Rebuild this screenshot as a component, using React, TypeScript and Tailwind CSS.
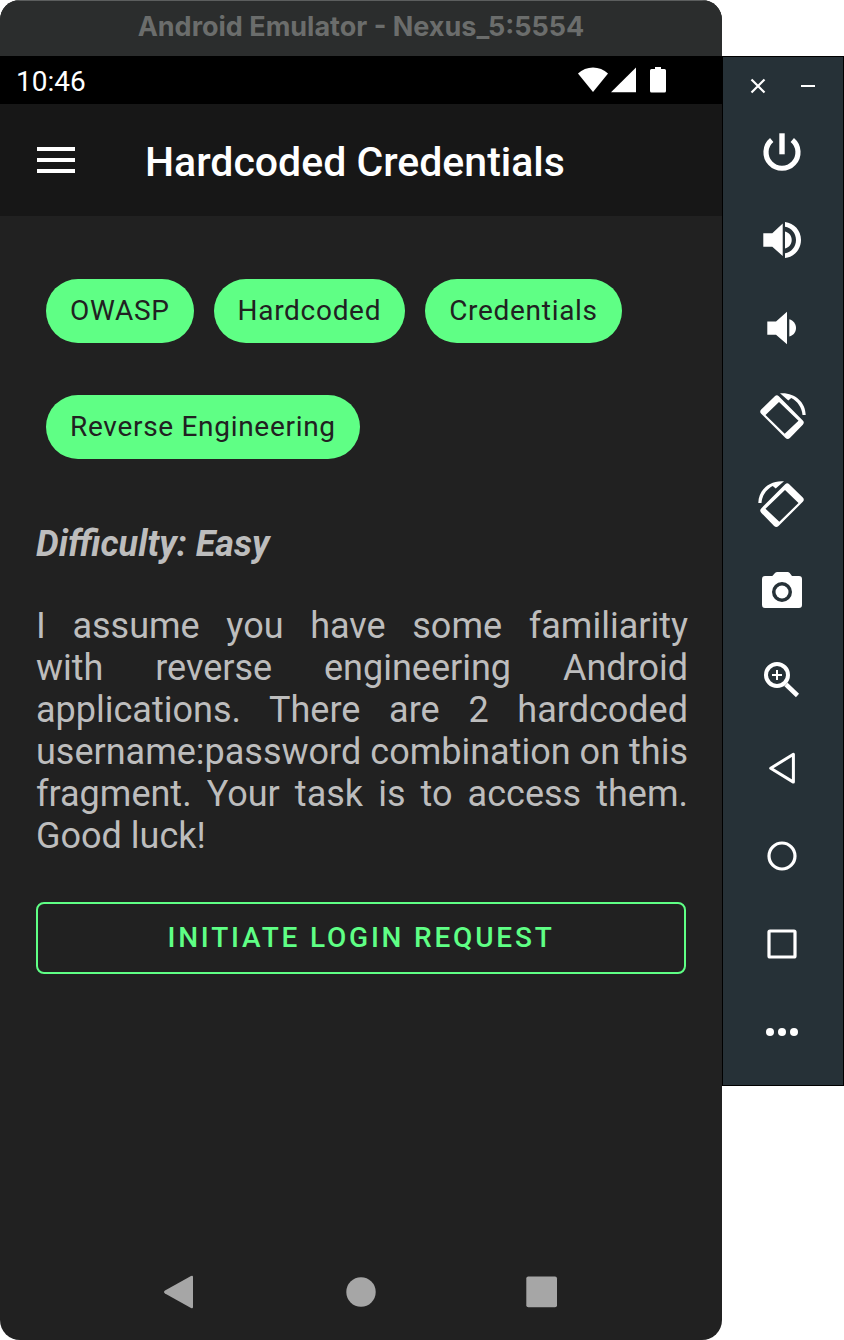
import type { ReactNode } from "react";

const tags = ["OWASP", "Hardcoded", "Credentials", "Reverse Engineering"];

const rotateShape = (
  <>
    <path
      fillRule="evenodd"
      d="M15.8 4.2Q17.8 2.2 19.8 4.2L43.8 28.4Q45.8 30.6 43.8 32.8L30.9 46Q28.7 48 26.5 46L2.2 21.8Q0.2 19.7 2.2 17.6ZM20 10L6.5 23L25.7 41.8L39.5 28.8Z"
    />
    <path d="M21 1.3C35 0 46.5 9.500 46.700 23H43.500C43 15.500 38.500 9.200 32.200 6L29.300 8.500Z" />
  </>
);

const tools: { label: string; icon: ReactNode }[] = [
  {
    label: "Power",
    icon: (
      <>
        <path d="M12.7 12A16 16 0 1 0 33.3 12" fill="none" stroke="currentColor" strokeWidth="5.2" />
        <rect x="20.300" y="5.300" width="5.400" height="21" />
      </>
    ),
  },
  {
    label: "Volume up",
    icon: (
      <>
        <path d="M4.300 17.200H13.300L23.700 7.500V40L13.300 30.700H4.300Z" />
        <path d="M26 15.500C30 16.500 32.700 19.800 32.700 24S30 31.500 26 32.500Z" />
        <path d="M26 6C35.200 7 42 14.500 42 24S35.200 41 26 42V37.200C32.300 36.300 37 30.800 37 24S32.300 11.700 26 10.800Z" />
      </>
    ),
  },
  {
    label: "Volume down",
    icon: (
      <>
        <path d="M8.300 17.500H17L28 7.800V40.200L17 30.700H8.300Z" />
        <path d="M30.300 15.300C34.300 16.500 37 19.800 37 24S34.300 31.500 30.300 32.500Z" />
      </>
    ),
  },
  { label: "Rotate right", icon: rotateShape },
  { label: "Rotate left", icon: <g transform="matrix(-1 0 0 1 46 0)">{rotateShape}</g> },
  {
    label: "Take screenshot",
    icon: (
      <>
        <path
          fillRule="evenodd"
          d="M13.300 8L16 5Q17 4 18.300 4H28.500Q29.800 4 30.700 5L33 8H40Q43 8 43 11V37Q43 40 40 40H6Q3 40 3 37V11Q3 8 6 8ZM23 14A10 10 0 1 0 23 34A10 10 0 1 0 23 14Z"
        />
        <circle cx="23" cy="24" r="6.500" />
      </>
    ),
  },
  {
    label: "Zoom",
    icon: (
      <g fill="none" stroke="currentColor">
        <circle cx="18" cy="19" r="11" strokeWidth="4" />
        <path d="M13 19H23M18 14V24" strokeWidth="2" />
        <path d="M27 28.500L38.500 39.500" strokeWidth="4.500" />
      </g>
    ),
  },
  {
    label: "Back",
    icon: <path d="M11.700 24.200L34.400 10.300V38.100Z" fill="none" stroke="currentColor" strokeWidth="3" strokeLinejoin="round" />,
  },
  { label: "Home", icon: <circle cx="23" cy="24" r="13" fill="none" stroke="currentColor" strokeWidth="3.200" /> },
  {
    label: "Overview",
    icon: <rect x="10" y="11" width="26" height="26" rx="1" fill="none" stroke="currentColor" strokeWidth="3.200" />,
  },
  {
    label: "More",
    icon: (
      <>
        <circle cx="11" cy="24" r="4" />
        <circle cx="23" cy="24" r="4" />
        <circle cx="35" cy="24" r="4" />
      </>
    ),
  },
];

function StatusBar() {
  return (
    <div className="flex h-12 items-center justify-between bg-black pl-4 pr-14 text-white">
      <span className="pt-[3px] text-[28px] leading-8">10:46</span>
      <svg className="h-7 w-[90px]" viewBox="0 0 90 28" fill="currentColor" aria-hidden="true">
        <path d="M2 7.500C10 -.500 24 -.500 32 7.500L17 26Z" />
        <path d="M60 1.500V26.200H35Z" />
        <path d="M79 1H85V3H88.500Q90 3 90 4.500V25Q90 26.500 88.500 26.500H75.500Q74 26.500 74 25V4.500Q74 3 75.500 3H79Z" />
      </svg>
    </div>
  );
}

function AppBar() {
  return (
    <header className="flex h-28 items-center gap-[69px] bg-[#171717] pl-9 text-white">
      <button type="button" aria-label="Open menu">
        <svg className="h-10 w-10" viewBox="0 0 40 40" fill="currentColor" aria-hidden="true">
          <path d="M1 7H39V11H1ZM1 18H39V22H1ZM1 29H39V33H1Z" />
        </svg>
      </button>
      <h1 className="pt-1 text-[41px] font-medium leading-[48px]">Hardcoded Credentials</h1>
    </header>
  );
}

function NavigationBar() {
  return (
    <nav className="flex h-24 items-center justify-center gap-[142px] text-[#a6a6a6]">
      <button type="button" aria-label="Back">
        <svg className="h-10 w-10" viewBox="0 0 40 40" fill="currentColor" aria-hidden="true">
          <path d="M6 18.500L32 4Q34 3 34 5V35Q34 37 32 36L6 21.500Q4 20 6 18.500Z" />
        </svg>
      </button>
      <button type="button" aria-label="Home">
        <svg className="h-10 w-10" viewBox="0 0 40 40" fill="currentColor" aria-hidden="true">
          <circle cx="20" cy="20" r="14.700" />
        </svg>
      </button>
      <button type="button" aria-label="Overview">
        <svg className="h-10 w-10" viewBox="0 0 40 40" fill="currentColor" aria-hidden="true">
          <rect x="3.300" y="4.500" width="30.700" height="30.700" rx="2" />
        </svg>
      </button>
    </nav>
  );
}

function Toolbar() {
  return (
    <aside className="mt-14 w-[122px] shrink-0 self-start border border-black bg-[#263137] pb-[9px] text-white">
      <div className="flex h-[51px] items-center justify-center gap-[30px] pt-[6px]">
        <button type="button" aria-label="Close">
          <svg className="h-5 w-5" viewBox="0 0 20 20" fill="none" stroke="currentColor" strokeWidth="2.200" aria-hidden="true">
            <path d="M3.500 3.500L16.500 16.500M16.500 3.500L3.500 16.500" />
          </svg>
        </button>
        <button type="button" aria-label="Minimize">
          <svg className="h-5 w-5" viewBox="0 0 20 20" fill="currentColor" aria-hidden="true">
            <rect x="3" y="9" width="14" height="2" />
          </svg>
        </button>
      </div>
      {tools.map((tool) => (
        <button key={tool.label} type="button" aria-label={tool.label} className="flex h-[88px] w-full items-center justify-center">
          <svg className="h-12 w-12 overflow-visible" viewBox="0 0 48 48" fill="currentColor" aria-hidden="true">
            {tool.icon}
          </svg>
        </button>
      ))}
    </aside>
  );
}

export default function App() {
  return (
    <div className="flex min-h-screen bg-white font-['Roboto',sans-serif]">
      <div className="flex min-w-0 flex-1 flex-col overflow-hidden rounded-[20px] bg-[#212121]">
        <div className="flex h-14 items-center justify-center border-t border-[#5c5e5e] bg-[#2b2d2d] pb-1">
          <span className="font-['Inter',sans-serif] text-[27px] font-bold leading-8 text-[#6b6d6c]">
            Android Emulator - Nexus_5:5554
          </span>
        </div>
        <StatusBar />
        <AppBar />
        <main className="flex flex-1 flex-col px-9 pt-[63px]">
          <ul className="flex flex-wrap gap-x-5 gap-y-[52px] px-[10px]">
            {tags.map((tag) => (
              <li key={tag} className="flex h-16 items-center rounded-full bg-[#5fff85] px-6 text-[28px] leading-8 tracking-wide text-[#212121]">
                {tag}
              </li>
            ))}
          </ul>
          <h2 className="mt-16 text-[36px] font-bold italic leading-[42px] text-[#bdbdbd]">Difficulty: Easy</h2>
          <p className="-mr-0.5 mt-10 text-justify text-[36px] leading-[42px] text-[#bdbdbd]">
            I assume you have some familiarity with&nbsp;reverse engineering Android applications. There are 2 hardcoded
            username:password combination on this fragment. Your task is to access them. Good luck!
          </p>
          <button
            type="button"
            className="mt-[45px] h-[72px] rounded-lg border-2 border-[#5fff85] text-[28px] font-medium leading-8 tracking-widest text-[#5fff85]"
          >
            INITIATE LOGIN REQUEST
          </button>
        </main>
        <NavigationBar />
      </div>
      <Toolbar />
    </div>
  );
}
